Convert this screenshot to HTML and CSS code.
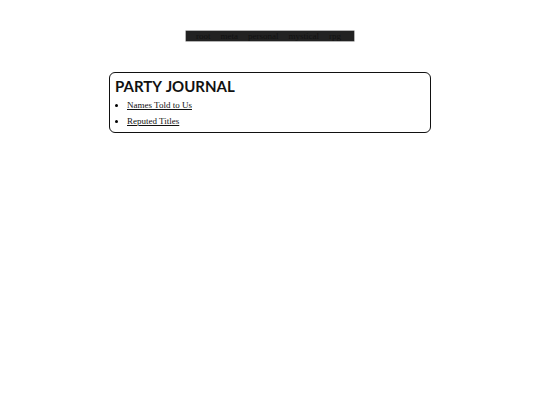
FILE: index.html
```html
<!DOCTYPE html>
<html>
<head>
<meta charset="utf-8">
<link rel="stylesheet" href="styles.css">
</head>
<body>
<div class="page">
  <nav class="nav">
    <a class="nav-link" href="#">root</a>
    <a class="nav-link" href="#">meta</a>
    <a class="nav-link" href="#">personal</a>
    <a class="nav-link" href="#">mystical</a>
    <a class="nav-link" href="#">rpg</a>
  </nav>
  <section class="card">
    <h1 class="title">PARTY JOURNAL</h1>
    <ul class="list">
      <li class="item"><a href="#" class="link">Names Told to Us</a></li>
      <li class="item"><a href="#" class="link">Reputed Titles</a></li>
    </ul>
  </section>
</div>
</body>
</html>
```

FILE: styles.css
```css
html, body {
  margin: 0;
  padding: 0;
  background: #ffffff;
}
.page {
  display: flex;
  flex-direction: column;
  align-items: center;
  padding-top: 31px;
}
.nav {
  display: flex;
  gap: 10px;
  background: #222222;
  padding: 0 13px 0 10px;
  height: 10px;
  align-items: center;
  font-family: "Liberation Serif", serif;
  font-size: 9px;
  line-height: 10px;
  box-shadow: 0 0 0 0.5px #666;
}
.nav-link {
  color: #111111;
  text-decoration: none;
}
.card {
  margin-top: 31px;
  width: 316px;
  border: 1.5px solid #111111;
  border-radius: 6px;
  padding: 3px 0 5px 4px;
}
.title {
  margin: 0 0 0 1px;
  font-family: "Lato", sans-serif;
  font-weight: 700;
  font-size: 15px;
  line-height: 21px;
  color: #111111;
  word-spacing: 1px;
}
.list {
  margin: 0;
  padding: 0 0 0 13px;
  font-family: "Liberation Serif", serif;
  font-size: 9px;
  line-height: 12px;
}
.item {
  margin-top: 4px;
}
.item:first-child {
  margin-top: 2px;
}
.link {
  color: #111111;
  text-decoration: underline;
}
```
